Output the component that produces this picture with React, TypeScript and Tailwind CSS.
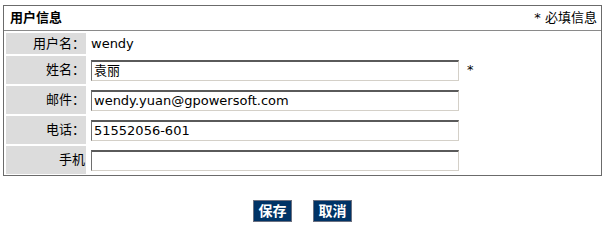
import React from 'react';

const font = { fontFamily: '"DejaVu Sans", "Noto Sans CJK SC", sans-serif' };

interface Field {
  label: string;
  value?: string;
  input: boolean;
  required?: boolean;
}

const fields: Field[] = [
  { label: '用户名：', value: 'wendy', input: false },
  { label: '姓名：', value: '袁丽', input: true, required: true },
  { label: '邮件：', value: 'wendy.yuan@gpowersoft.com', input: true },
  { label: '电话：', value: '51552056-601', input: true },
  { label: '手机', value: '', input: true },
];

const App = () => {
  return (
    <div className="w-[606px] h-[226px] bg-white pt-[5px] pl-[3px] text-[13px] text-black" style={font}>
      {/* User info box */}
      <div className="w-[599px] border border-[#6b6b6b]">
        <div className="h-[25px] flex items-center justify-between pl-[6px] pr-[4px] border-b border-[#8a8a8a]">
          <span className="font-bold text-[13px]">用户信息</span>
          <span className="text-[13px]">* 必填信息</span>
        </div>

        <div className="flex flex-col gap-[2px] p-[2px] pb-[1px]">
          {fields.map((f) => (
            <div key={f.label} className={`flex gap-[3px] ${f.input ? 'h-[28px]' : 'h-[21px]'}`}>
              <div className="w-[80px] shrink-0 bg-[#dcdcdc] flex items-center justify-end pr-[1px]">
                {f.label}
              </div>
              <div className="flex-1 flex items-center pl-[2px]">
                {f.input ? (
                  <>
                    <div className="w-[368px] h-[21px] flex items-center pl-[2px] border-t-2 border-l border-t-[#5a5a5a] border-l-[#6e6e6e] border-r border-b border-r-[#d4d0c8] border-b-[#d4d0c8] bg-white">
                      {f.value}
                    </div>
                    {f.required && <span className="ml-[8px]">*</span>}
                  </>
                ) : (
                  <span>{f.value}</span>
                )}
              </div>
            </div>
          ))}
        </div>
      </div>

      {/* Actions */}
      <div className="w-[599px] flex justify-center gap-[21px] mt-[24px]">
        <button className="h-[22px] w-[39px] bg-[#003366] border border-[#6b7080] text-white font-bold text-[14px] leading-none">
          保存
        </button>
        <button className="h-[22px] w-[39px] bg-[#003366] border border-[#6b7080] text-white font-bold text-[14px] leading-none">
          取消
        </button>
      </div>
    </div>
  );
};

export default App;
